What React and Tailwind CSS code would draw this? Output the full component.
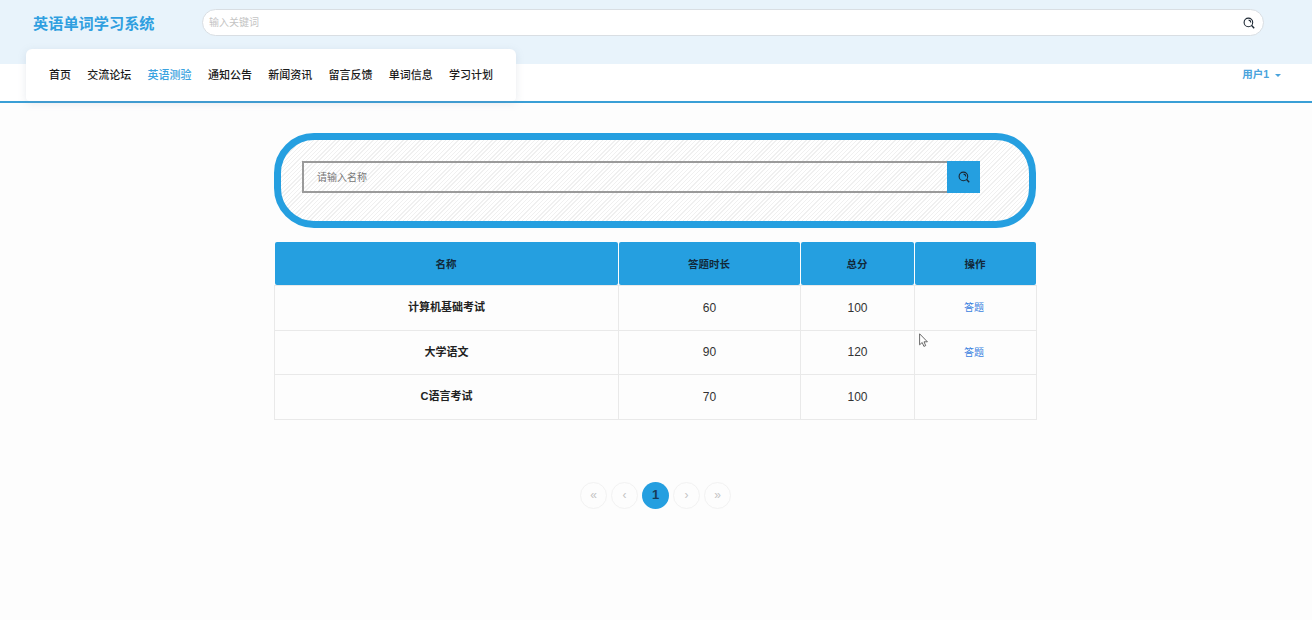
const font = "font-['Liberation_Sans','Noto_Sans_CJK_SC',sans-serif]";

const navItems = ['首页', '交流论坛', '英语测验', '通知公告', '新闻资讯', '留言反馈', '单词信息', '学习计划'];

const rows = [
  { name: '计算机基础考试', time: 60, score: 100, action: true },
  { name: '大学语文', time: 90, score: 120, action: true },
  { name: 'C语言考试', time: 70, score: 100, action: false },
];

function SearchIcon() {
  return (
    <svg width="12" height="12" viewBox="0 0 12 12" fill="none" stroke="#1c2733" strokeWidth="1.1">
      <circle cx="5.4" cy="5.4" r="4.3" />
      <path d="M5.6 3.1a2.4 2.4 0 0 1 2.2 2.3" />
      <path d="M8.6 8.6l2.6 2.6" strokeWidth="1.4" />
    </svg>
  );
}

function PageBtn({ children, active }) {
  return (
    <span
      className={
        active
          ? 'w-[27px] h-[27px] rounded-full bg-[#259fe0] flex items-center justify-center text-[13px] font-bold text-[#173b57]'
          : 'w-[27px] h-[27px] rounded-full border border-[#f2f2f2] flex items-center justify-center text-xs text-[#c4c4c4]'
      }
    >
      {children}
    </span>
  );
}

export default function App() {
  return (
    <div className={`${font} relative w-[1312px] h-[620px] overflow-hidden bg-[#fdfdfd]`}>
      <div className="h-[64px] bg-[#e8f3fb] pt-[9px] pl-[33px] flex items-start">
        <h1 className="w-[169px] h-[29px] leading-[29px] text-[15.2px] font-bold text-[#2f9fe0]">英语单词学习系统</h1>
        <div className="w-[1062px] h-[27px] rounded-full bg-white border border-[#d9dee3] flex items-center justify-between pl-[6px] pr-[8px]">
          <span className="text-[10px] text-[#c4c4c4]">输入关键词</span>
          <SearchIcon />
        </div>
      </div>

      <div className="h-[39px] border-b-2 border-[#3a9fd6] bg-white flex justify-between">
        <div className="relative ml-[26px] -mt-[15px] w-[490px] h-[52px] bg-white rounded-t-md rounded-b-sm shadow-[0_2px_8px_rgba(120,140,160,0.18)] flex items-center pl-[23px] gap-x-[16.3px]">
          {navItems.map((item) => (
            <a key={item} className={`text-[11px] leading-none font-medium whitespace-nowrap ${item === '英语测验' ? 'text-[#3aa3e0]' : 'text-[#1a1a1a]'}`}>
              {item}
            </a>
          ))}
        </div>
        <div className="mr-[31px] mt-[4px] h-[13px] flex items-center gap-[6px] text-[10.5px] font-bold text-[#4aa3dc]">
          <span>用户1</span>
          <span className="border-x-[3px] border-x-transparent border-t-[3px] border-t-[#4aa3dc] mt-[1px]" />
        </div>
      </div>

      <div className="ml-[274px] mt-[30px] w-[762px]">
        <div className="h-[95px] rounded-[40px] border-[7px] border-[#259fe0] pl-[21px] pt-[21px] bg-[repeating-linear-gradient(135deg,#ffffff_0px,#ffffff_2px,#f0f0f0_2px,#f0f0f0_3px)]">
          <div className="flex h-[32px] w-[678px]">
            <div className="flex-1 border-2 border-[#9a9a9a] border-r-0 flex items-center pl-[13px] text-[10px] text-[#777777] bg-transparent">
              请输入名称
            </div>
            <button className="w-[33px] bg-[#259fe0] flex items-center justify-center">
              <SearchIcon />
            </button>
          </div>
        </div>

        <table className="mt-[14px] w-[762px] table-fixed border-collapse text-xs text-[#333333]">
          <colgroup>
            <col className="w-[344px]" />
            <col className="w-[182px]" />
            <col className="w-[114px]" />
            <col className="w-[122px]" />
          </colgroup>
          <thead>
            <tr className="h-[43px]">
              {['名称', '答题时长', '总分', '操作'].map((h) => (
                <th key={h} className="p-0 font-bold text-[10.5px] text-[#12293a]">
                  <div className="h-[43px] mr-px rounded-[2px] bg-[#259fe0] flex items-center justify-center">{h}</div>
                </th>
              ))}
            </tr>
          </thead>
          <tbody>
            {rows.map((r) => (
              <tr key={r.name} className="h-[44.5px]">
                <td className="border border-[#e9e9e9] text-center font-bold text-[11px] text-[#222222]">{r.name}</td>
                <td className="border border-[#e9e9e9] text-center">{r.time}</td>
                <td className="border border-[#e9e9e9] text-center">{r.score}</td>
                <td className="border border-[#e9e9e9] text-center text-[10px] text-[#3b82e0] pr-[3px]">{r.action ? <a>答题</a> : null}</td>
              </tr>
            ))}
          </tbody>
        </table>
      </div>

      <div className="mt-[62px] flex justify-center gap-[4px] pr-[1px]">
        <PageBtn>«</PageBtn>
        <PageBtn>‹</PageBtn>
        <PageBtn active>1</PageBtn>
        <PageBtn>›</PageBtn>
        <PageBtn>»</PageBtn>
      </div>

      <svg className="absolute left-[919px] top-[333px]" width="10" height="15" viewBox="0 0 10 15" fill="#fff" stroke="#444" strokeWidth="0.8">
        <path d="M0.6 0.8v11l2.6-2.3 1.7 3.9 1.8-.8-1.7-3.8h3.4z" />
      </svg>
    </div>
  );
}
